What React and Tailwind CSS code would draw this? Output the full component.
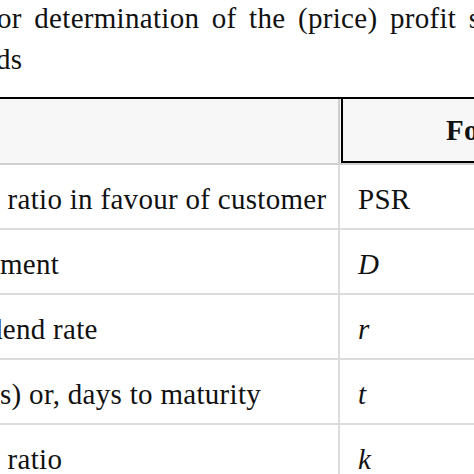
import React from 'react';

const rows = [
  { label: ' ratio in favour of customer', shift: 'ml-0', symbol: 'PSR', italic: false },
  { label: 'ment', shift: 'ml-0', symbol: 'D', italic: true },
  { label: 'dend rate', shift: 'ml-[-12px]', symbol: 'r', italic: true },
  { label: 's) or, days to maturity', shift: 'ml-0', symbol: 't', italic: true },
  { label: ' ratio', shift: 'ml-0', symbol: 'k', italic: true },
];

const App = () => {
  return (
    <div className="w-[474px] h-[474px] overflow-hidden bg-white text-[#111] font-['Liberation_Serif','Times_New_Roman',serif]">
      {/* Caption (cut off on both sides) */}
      <div className="mt-[-2px] text-[29px] leading-[41px] tracking-[0.3px] [word-spacing:5px] whitespace-nowrap">
        <div className="ml-[-3px]">or determination of the (price) profit sharing</div>
        <div className="ml-[-4px]">ds</div>
      </div>

      {/* Table */}
      <div className="mt-[17px] w-[520px] border-t-2 border-black text-[29px] tracking-[0.3px]">
        {/* Header */}
        <div className="flex h-[66px] border-b-2 border-[#cfcfcf] bg-[#f7f7f7]">
          <div className="w-[340px] shrink-0 border-r-2 border-[#cfcfcf]" />
          <div className="ml-[1px] flex-1 flex items-center border-l-2 border-b-2 border-black pl-[103px] pt-[2px] font-bold whitespace-nowrap">
            Formula
          </div>
        </div>

        {/* Body rows */}
        {rows.map((row) => (
          <div key={row.symbol} className="flex h-[65px] border-b-2 border-[#dcdcdc]">
            <div className="w-[340px] shrink-0 overflow-hidden border-r-2 border-[#dcdcdc] flex items-center pt-[6px]">
              <span className={`whitespace-pre ${row.shift}`}>{row.label}</span>
            </div>
            <div className="flex-1 flex items-center pl-[18px] pt-[6px]">
              <span className={row.italic ? 'italic' : ''}>{row.symbol}</span>
            </div>
          </div>
        ))}
      </div>
    </div>
  );
};

export default App;
